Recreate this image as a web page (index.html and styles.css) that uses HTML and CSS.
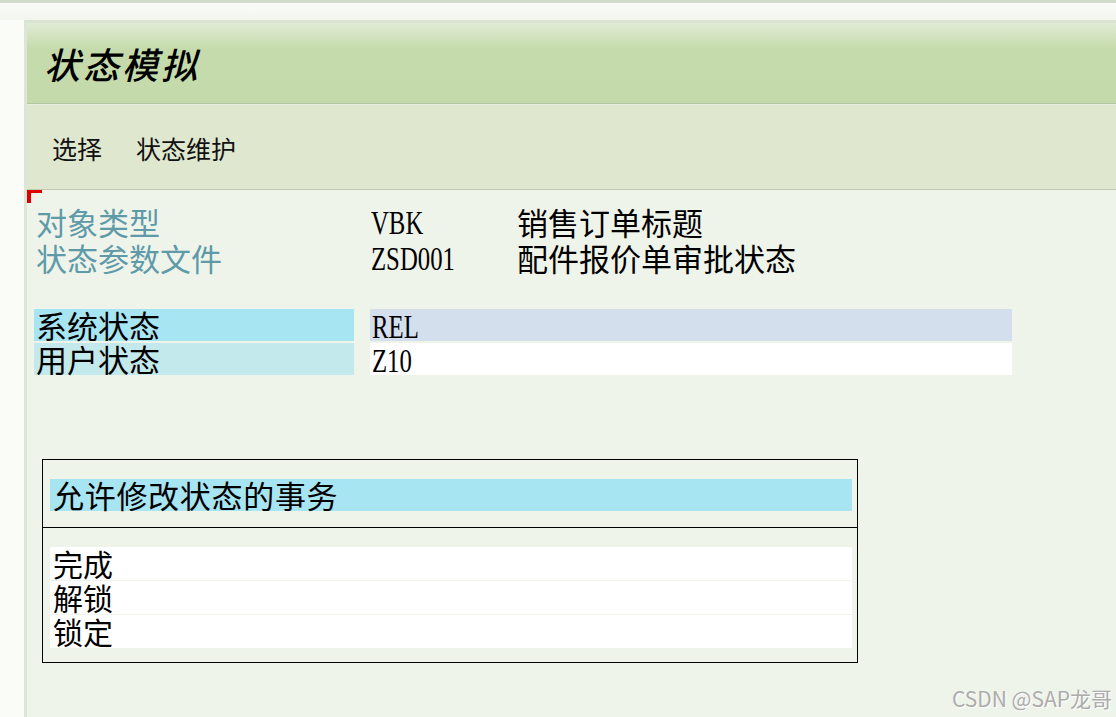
FILE: index.html
```html
<!DOCTYPE html>
<html lang="zh-CN">
<head>
<meta charset="utf-8">
<title>状态模拟</title>
<link rel="stylesheet" href="styles.css">
</head>
<body>
<div class="topline"></div>
<div class="topband"></div>
<div class="frame">
  <div class="gutter"></div>
  <div class="panel">
    <div class="titlebar"><h1 class="title">状态模拟</h1></div>
    <div class="menubar">
      <span class="menu-item">选择</span>
      <span class="menu-item">状态维护</span>
    </div>
    <div class="content">
      <span class="focus-mark"></span>
      <div class="info">
        <span class="info-label">对象类型</span>
        <span class="info-code"><span class="latin">VBK</span></span>
        <span class="info-desc">销售订单标题</span>
        <span class="info-label">状态参数文件</span>
        <span class="info-code"><span class="latin">ZSD001</span></span>
        <span class="info-desc">配件报价单审批状态</span>
      </div>
      <div class="status">
        <span class="status-label sys">系统状态</span>
        <span class="status-value sys"><span class="latin">REL</span></span>
        <span class="status-label usr">用户状态</span>
        <span class="status-value usr"><span class="latin">Z10</span></span>
      </div>
      <div class="box">
        <div class="box-head">
          <div class="box-title">允许修改状态的事务</div>
        </div>
        <div class="box-body">
          <div class="box-row">完成</div>
          <div class="box-row">解锁</div>
          <div class="box-row">锁定</div>
        </div>
      </div>
      <div class="watermark">CSDN @SAP龙哥</div>
    </div>
  </div>
</div>
</body>
</html>
```

FILE: styles.css
```css
html, body {
  margin: 0;
  padding: 0;
  height: 100%;
  overflow: hidden;
}
body {
  background: #f9fbf6;
  font-family: "Noto Sans CJK SC", sans-serif;
  color: #000;
  display: flex;
  flex-direction: column;
}
.topline {
  height: 3px;
  background: #d3dccb;
  flex: none;
}
.topband {
  height: 17px;
  background: linear-gradient(#fbfcf9, #f2f6ee);
  flex: none;
}
.frame {
  flex: 1;
  display: flex;
  min-height: 0;
}
.gutter {
  width: 24px;
  flex: none;
  background: #fafcf8;
}
.panel {
  flex: 1;
  display: flex;
  flex-direction: column;
  border-left: 3px solid #dde6d6;
  border-top: 3px solid #dbe4d3;
  background: #eff4ea;
  min-width: 0;
}
.titlebar {
  height: 80px;
  flex: none;
  background: linear-gradient(#e1ebd5 0px, #c5dbab 26px, #c4daaa 100%);
  border-bottom: 1px solid #b3c5a3;
  display: flex;
  align-items: center;
  padding-left: 17px;
}
.title {
  margin: 0;
  font-size: 36px;
  font-weight: 500;
  font-style: italic;
  letter-spacing: 3px;
  line-height: 1;
  color: #000;
}
.menubar {
  height: 86px;
  flex: none;
  background: #dfe7cf;
  border-top: 1px solid #e8eedf;
  border-bottom: 1px solid #bfc9b3;
  display: flex;
  align-items: center;
  gap: 34px;
  padding-left: 25px;
  padding-top: 2px;
  box-sizing: border-box;
}
.menu-item {
  font-size: 25px;
  line-height: 1;
  color: #111;
}
.content {
  flex: 1;
  position: relative;
  padding-top: 14px;
}
.focus-mark {
  position: absolute;
  left: 0;
  top: 0;
  width: 11px;
  height: 10px;
  border-top: 3px solid #e00000;
  border-left: 4px solid #e00000;
}
.info {
  display: grid;
  grid-template-columns: 335px 146px auto;
  grid-auto-rows: 36px;
  align-items: center;
  padding-left: 9px;
  font-size: 31px;
  line-height: 36px;
}
.info-label {
  color: #5e9aa8;
}
.info-desc {
  color: #000;
}
.latin {
  display: inline-block;
  font-family: "Liberation Serif", serif;
  font-size: 33px;
  transform: scaleX(0.75);
  transform-origin: left center;
  white-space: nowrap;
}
.status {
  display: grid;
  grid-template-columns: 320px 642px;
  column-gap: 16px;
  row-gap: 2px;
  grid-auto-rows: 32px;
  margin-top: 33px;
  margin-left: 7px;
  font-size: 31px;
  line-height: 32px;
}
.status-label {
  padding-left: 2px;
}
.status-label.sys { background: #a7e5f3; }
.status-label.usr { background: #c4e9ec; }
.status-value {
  padding-left: 2px;
}
.status-value.sys { background: #d4dfee; }
.status-value.usr { background: #ffffff; }
.box {
  margin-top: 84px;
  margin-left: 15px;
  width: 814px;
  border: 1px solid #000;
}
.box-head {
  padding: 19px 5px 16px 7px;
  border-bottom: 1px solid #000;
}
.box-title {
  background: #a7e5f3;
  height: 32px;
  line-height: 32px;
  font-size: 31px;
  letter-spacing: 0.7px;
  padding-left: 3px;
}
.box-body {
  padding: 19px 5px 14px 7px;
  display: flex;
  flex-direction: column;
  gap: 1px;
}
.box-row {
  background: #fff;
  height: 33px;
  line-height: 33px;
  font-size: 30px;
  padding-left: 3px;
}
.watermark {
  position: absolute;
  right: 4px;
  bottom: 8px;
  font-family: "Noto Sans CJK SC", sans-serif;
  font-size: 21px;
  line-height: 1;
  color: #acacac;
  text-shadow: 1px 1px 0 #ffffff;
}
```
